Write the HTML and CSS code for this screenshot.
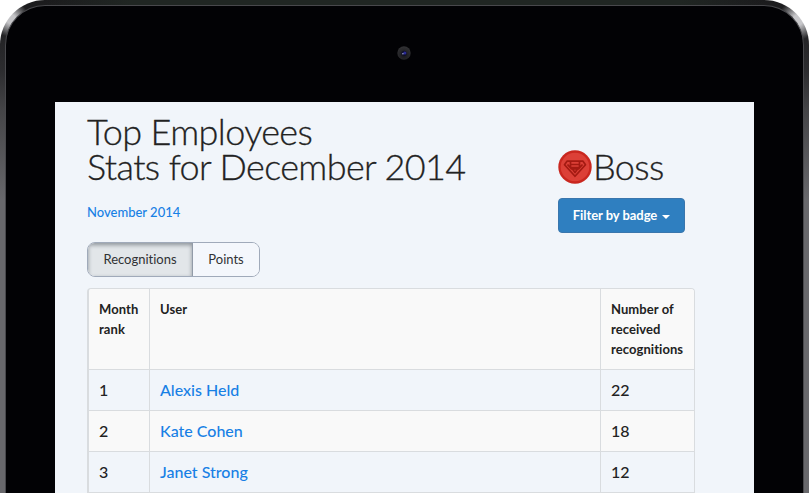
FILE: index.html
```html
<!DOCTYPE html>
<html lang="en">
<head>
<meta charset="utf-8">
<title>Top Employees</title>
<link rel="stylesheet" href="styles.css">
</head>
<body>
<div class="tablet">
  <div class="bezel">
    <div class="camera-bar">
      <svg class="camera" width="16" height="16" viewBox="0 0 16 16">
        <defs><radialGradient id="lens" cx=".5" cy=".65" r=".6"><stop offset="0" stop-color="#17171b"/><stop offset="1" stop-color="#303033"/></radialGradient></defs>
        <circle cx="8" cy="8" r="6.7" fill="url(#lens)"/>
        <circle cx="8" cy="8.3" r="2.6" fill="#11112c"/>
        <circle cx="8.8" cy="8" r="1.6" fill="#2b2b98"/>
        <circle cx="6.9" cy="8.8" r=".8" fill="#9ca7c5"/>
      </svg>
    </div>
    <main class="screen">
      <header class="heading">
        <div class="heading-main">
          <h1 class="title">Top Employees<br>Stats for December 2014</h1>
          <a class="month-link">November 2014</a>
        </div>
        <div class="badge-panel">
          <div class="badge-name">
            <svg class="badge-icon" width="34" height="34" viewBox="0 0 34 34">
              <circle cx="17" cy="17" r="16.7" fill="#c9271f"/>
              <circle cx="17" cy="17" r="14.3" fill="#dc4037"/>
              <g fill="none" stroke="#a41a12" stroke-width="1.7" stroke-linejoin="round">
                <path d="M9 11.2H25L27.5 14.8L17 26.3L6.500 14.800Z"/>
                <path d="M12.500 11.2V17.600H21.500V11.2M12.500 14.500H21.500M9.500 14.500L13.500 19H20.500L24.500 14.500M14.500 19L17 22.500L19.500 19"/>
              </g>
            </svg>
            <span>Boss</span>
          </div>
          <button class="filter">Filter by badge<span class="caret"></span></button>
        </div>
      </header>
      <div class="tabs">
        <button class="tab active">Recognitions</button>
        <button class="tab">Points</button>
      </div>
      <table class="stats">
        <thead><tr><th class="rank">Month rank</th><th>User</th><th class="count">Number of received recognitions</th></tr></thead>
        <tbody>
          <tr><td>1</td><td><a>Alexis Held</a></td><td>22</td></tr>
          <tr><td>2</td><td><a>Kate Cohen</a></td><td>18</td></tr>
          <tr><td>3</td><td><a>Janet Strong</a></td><td>12</td></tr>
        </tbody>
      </table>
    </main>
  </div>
</div>
</body>
</html>
```
FILE: styles.css
```css
* { box-sizing: border-box; }
body {
  margin: 0;
  height: 493px;
  overflow: hidden;
  background: #fff;
  font-family: Lato, "Liberation Sans", sans-serif;
  font-variant-ligatures: none;
  color: #222;
}
.tablet {
  height: 493px;
  padding: 5px 5px 0;
  border-radius: 45px 45px 0 0;
  background:
    radial-gradient(circle 18px at 11px 19px, #c4c4c7 0 25%, transparent),
    radial-gradient(circle 20px at 798px 20px, #c8c8cb 0 25%, transparent),
    linear-gradient(90deg, transparent 45px, #202623 130px 680px, transparent 765px) top / 100% 6px no-repeat,
    linear-gradient(#1b1b1d 0, #2c2c2f 70px, #444447 110px, #68686c 200px);
}
.bezel {
  height: 488px;
  padding: 0 49px;
  border: 1px solid #48484c;
  border-bottom: 0;
  border-radius: 40px 40px 0 0;
  background: #020205;
}
.camera-bar {
  height: 96px;
  display: flex;
  justify-content: center;
  padding: 39px 2px 0 0;
}
.screen {
  height: 391px;
  padding: 12px 59px 0 32px;
  background: #f1f5fa;
}
.heading {
  display: flex;
  justify-content: space-between;
  height: 128px;
}
.title {
  margin: 0;
  font-size: 36px;
  line-height: 35px;
  font-weight: 300;
  letter-spacing: -.62px;
  -webkit-text-stroke: .3px #222;
  white-space: nowrap;
}
.month-link {
  display: block;
  margin-top: 18px;
  font-size: 13px;
  line-height: 20px;
  font-weight: 500;
}
a { color: #1880e5; }
.badge-panel {
  width: 137px;
  padding-top: 35px;
}
.badge-name {
  display: flex;
  align-items: center;
  gap: 1px;
  height: 35px;
  font-size: 36px;
  line-height: 35px;
  font-weight: 300;
  letter-spacing: -.62px;
  -webkit-text-stroke: .3px #222;
}
.badge-icon { flex: none; }
button { font-family: inherit; font-variant-ligatures: none; margin: 0; }
.filter {
  display: flex;
  align-items: center;
  justify-content: center;
  width: 127px;
  height: 35px;
  margin-top: 14px;
  padding: 0 0 1px;
  border: 1px solid #3a76ad;
  border-radius: 4px;
  background: #2f7fc0;
  color: #fff;
  font-size: 13px;
  font-weight: 700;
  letter-spacing: -.05px;
}
.caret {
  margin: 3px 0 0 5px;
  border: 4px solid transparent;
  border-top-color: #fff;
  border-bottom: 0;
}
.tabs {
  display: flex;
  width: 173px;
  height: 35px;
  border: 1px solid #a0aaba;
  border-radius: 8px;
  overflow: hidden;
}
.tab {
  flex: 1;
  padding: 0 0 2px;
  border: 0;
  background: #f4f7fc;
  color: #303234;
  font-size: 13px;
}
.tab.active {
  flex: 0 0 105px;
  border-right: 1px solid #929ba8;
  background: #e2e6e9;
  box-shadow: inset 0 2px 4px #8b9198;
}
.stats {
  width: 608px;
  margin-top: 11px;
  table-layout: fixed;
  border-collapse: separate;
  border-spacing: 0;
  border: 1px solid #d9dcdf;
  border-left-width: 2px;
  border-bottom: 0;
  border-radius: 4px 4px 0 0;
  overflow: hidden;
}
.rank { width: 61px; }
.count { width: 93px; }
th, td {
  padding: 0 9px 0 10px;
  text-align: left;
  border-right: 1px solid #d9dcdf;
  border-bottom: 1px solid #d9dcdf;
}
th:last-child, td:last-child { border-right: 0; }
th {
  height: 81px;
  padding-top: 10px;
  vertical-align: top;
  background: #f9f9f9;
  font-size: 13px;
  line-height: 20px;
  font-weight: 700;
  letter-spacing: .07px;
}
td {
  height: 41px;
  font-size: 16px;
  line-height: 20px;
  font-weight: 500;
}
tbody tr:nth-child(even) { background: #f9f9f9; }
```
